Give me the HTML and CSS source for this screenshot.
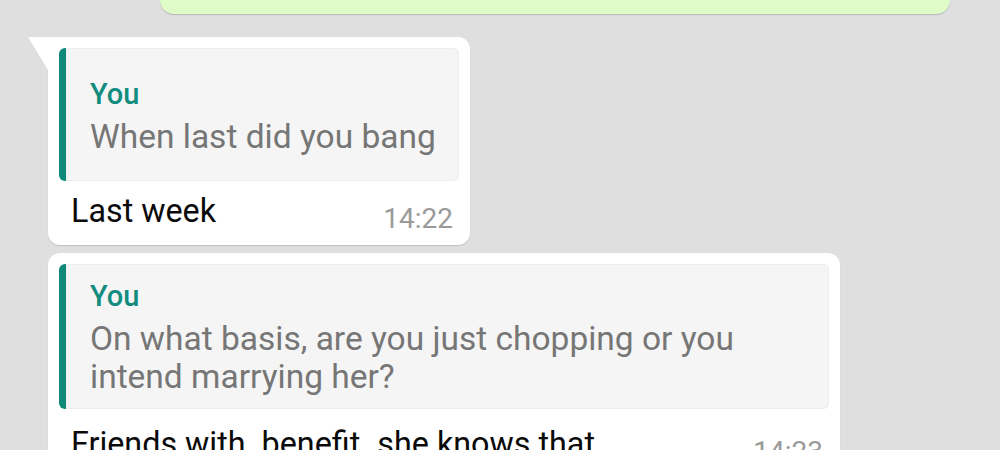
FILE: index.html
```html
<!DOCTYPE html>
<html>
<head>
<meta charset="utf-8">
<link rel="stylesheet" href="styles.css">
</head>
<body>
<div class="chat">
  <div class="sent-edge"></div>
  <div class="bubble bubble-one">
    <div class="quote quote-one">
      <div class="q-author">You</div>
      <div class="q-text">When last did you bang</div>
    </div>
    <div class="msg-row row-one">
      <span class="msg-text">Last week</span>
      <span class="time">14:22</span>
    </div>
  </div>
  <div class="bubble bubble-two">
    <div class="quote quote-two">
      <div class="q-author">You</div>
      <div class="q-text">On what basis, are you just chopping or you<br>intend marrying her?</div>
    </div>
    <div class="msg-row row-two">
      <span class="msg-text">Friends with&nbsp; benefit..she knows that</span>
      <span class="time">14:23</span>
    </div>
  </div>
</div>
</body>
</html>
```

FILE: styles.css
```css
html, body {
  margin: 0;
  padding: 0;
  background: #dfdfdf;
  height: 450px;
  overflow: hidden;
}

.chat {
  display: flex;
  flex-direction: column;
  align-items: flex-start;
  font-family: Roboto, "Noto Sans", "Liberation Sans", sans-serif;
}

.sent-edge {
  margin-left: 160px;
  width: 790px;
  height: 14px;
  background: #dffbc8;
  border-radius: 0 0 14px 14px;
  box-shadow: 0 1px 1px rgba(0, 0, 0, 0.18);
}

.bubble {
  position: relative;
  margin-left: 48px;
  background: #ffffff;
  border-radius: 12px;
  padding: 11px 11px 14px 11px;
  box-sizing: border-box;
  box-shadow: 0 1px 1px rgba(0, 0, 0, 0.14);
}

.bubble-one {
  margin-top: 23px;
  width: 422px;
  border-top-left-radius: 0;
}

.bubble-one::before {
  content: "";
  position: absolute;
  left: -20px;
  top: 0;
  width: 20px;
  height: 33px;
  background: #ffffff;
  clip-path: polygon(0 0, 100% 0, 100% 100%);
}

.bubble-two {
  margin-top: 8px;
  width: 792px;
}

.quote {
  background: #f5f5f5;
  border-left: 7px solid #0f8a7a;
  border-radius: 6px;
  padding-left: 24px;
  box-shadow: inset 0 0 0 1px #ededed;
}

.quote-one {
  padding-top: 28px;
  padding-bottom: 25px;
}

.quote-two {
  padding-top: 14px;
  padding-bottom: 13px;
}

.q-author {
  color: #128c7e;
  font-size: 29px;
  font-weight: 500;
  line-height: 36px;
  margin-bottom: 6px;
}

.q-text {
  color: #767676;
  font-size: 33.5px;
  line-height: 38px;
}

.msg-row {
  display: flex;
  justify-content: space-between;
  align-items: flex-end;
  padding: 0 6px 0 12px;
}

.row-one {
  margin-top: 10px;
}

.row-two {
  margin-top: 15px;
}

.msg-text {
  color: #0a0a0a;
  font-size: 32.3px;
  line-height: 40px;
  white-space: nowrap;
}

.time {
  color: #9a9a9a;
  font-size: 28px;
  line-height: 24px;
}
```
